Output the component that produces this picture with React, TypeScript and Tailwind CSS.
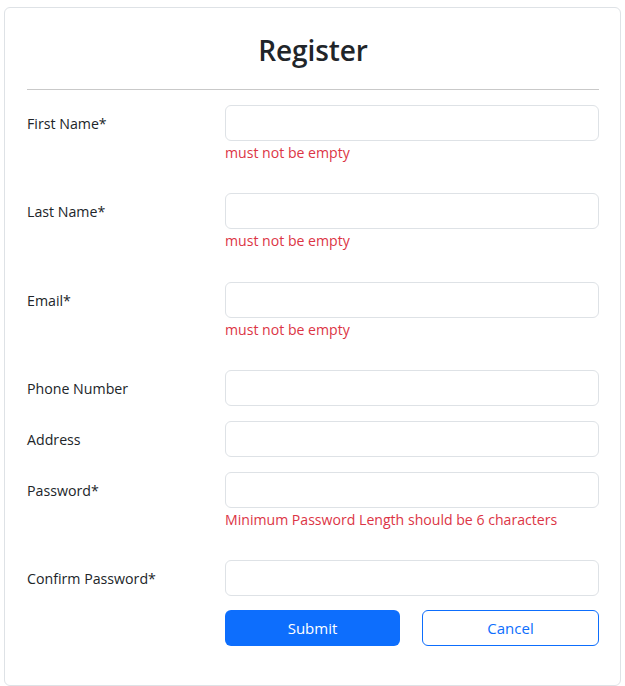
import { useState } from "react"

interface Field {
  name: string
  label: string
  type: string
  error?: string
}

const fields: Field[] = [
  { name: "firstName", label: "First Name*", type: "text", error: "must not be empty" },
  { name: "lastName", label: "Last Name*", type: "text", error: "must not be empty" },
  { name: "email", label: "Email*", type: "email", error: "must not be empty" },
  { name: "phone", label: "Phone Number", type: "text" },
  { name: "address", label: "Address", type: "text" },
  { name: "password", label: "Password*", type: "password", error: "Minimum Password Length should be 6 characters" },
  { name: "confirmPassword", label: "Confirm Password*", type: "password" },
]

export default function App() {
  const [values, setValues] = useState<Record<string, string>>({})

  return (
    <div
      className="min-h-screen bg-white pt-[7px] px-[4px] text-[#212529]"
      style={{ fontFamily: '"Segoe UI", "Open Sans", "Noto Sans", sans-serif' }}
    >
      <div className="h-[679px] w-[617px] rounded-[6px] border border-[#dee2e6] pl-[22px] pr-[21px]">
        <div className="flex h-[81px] items-center justify-center pt-[2px]">
          <h2 className="text-[28px] font-semibold leading-none tracking-[-0.1px]">Register</h2>
        </div>
        <hr className="border-t border-[#c9c9c9]" />

        <form className="mt-[15px]" onSubmit={(e) => e.preventDefault()}>
          {fields.map((field) => (
            <div key={field.name} className="mb-[15px] grid grid-cols-[198px_1fr]">
              <label htmlFor={field.name} className="pt-[7px] text-[14.2px] leading-6">
                {field.label}
              </label>
              <div>
                <input
                  id={field.name}
                  type={field.type}
                  value={values[field.name] || ""}
                  onChange={(e) => setValues({ ...values, [field.name]: e.target.value })}
                  className="block h-[36px] w-full rounded-[6px] border border-[#dee2e6] px-3 text-[15px] outline-none"
                />
                {field.error && (
                  <div className="pb-[13.25px] text-[14.1px] leading-6 text-[#dc3545]">{field.error}</div>
                )}
              </div>
            </div>
          ))}

          <div className="-mt-px grid grid-cols-[198px_1fr]">
            <div />
            <div className="flex gap-[22px]">
              <button
                type="submit"
                className="h-[36px] flex-1 rounded-[6px] bg-[#0d6efd] text-[15px] text-white"
              >
                Submit
              </button>
              <button
                type="button"
                className="h-[36px] flex-1 rounded-[6px] border border-[#0d6efd] bg-white text-[15px] text-[#0d6efd]"
              >
                Cancel
              </button>
            </div>
          </div>
        </form>
      </div>
    </div>
  )
}
